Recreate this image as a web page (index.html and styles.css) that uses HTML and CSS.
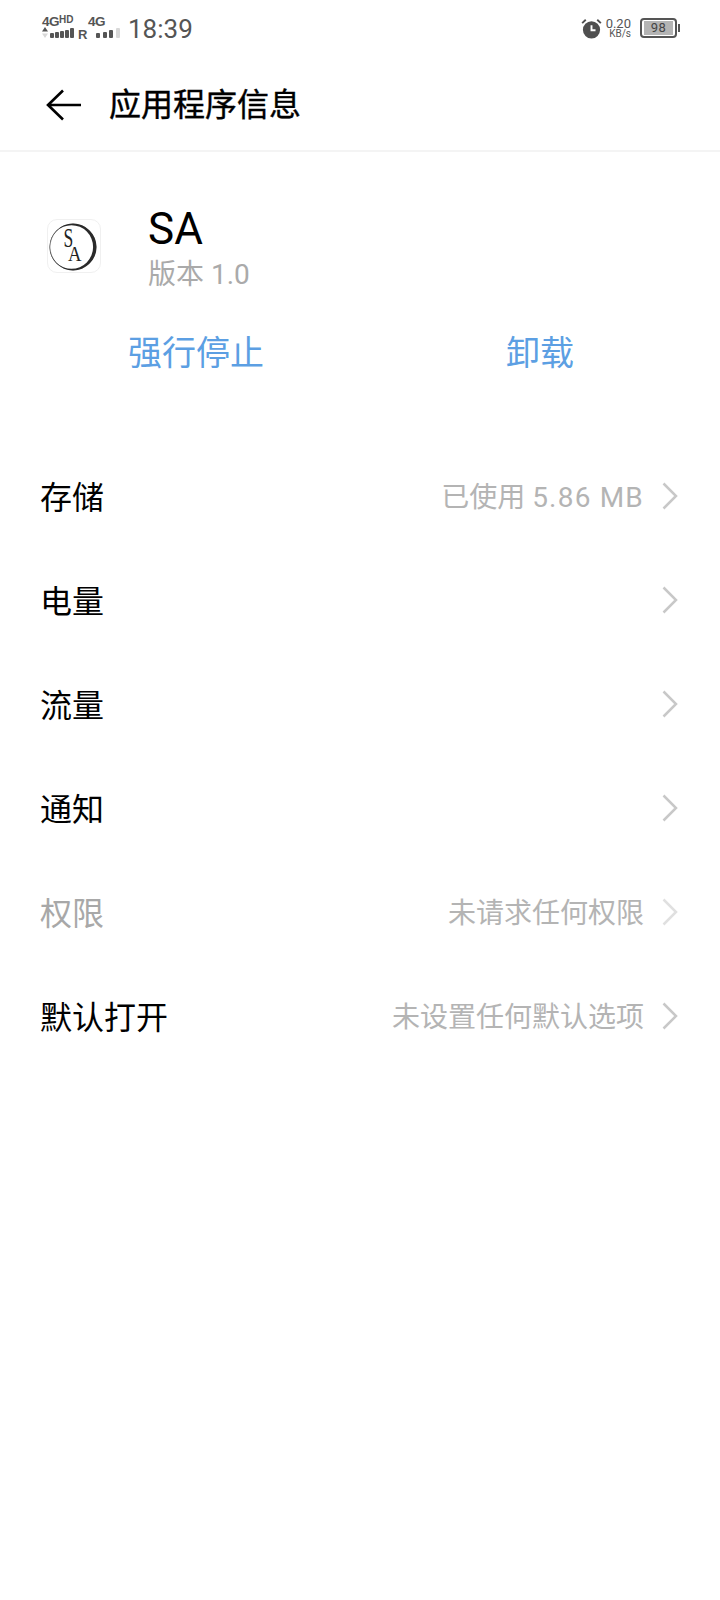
FILE: index.html
```html
<!DOCTYPE html>
<html lang="zh-CN">
<head>
<meta charset="utf-8">
<title>应用程序信息</title>
<link rel="stylesheet" href="styles.css">
</head>
<body>
<div class="phone">
  <header class="status">
    <div class="status-left">
      <div class="sim">
        <div class="net"><span class="net-g">4G</span><span class="net-hd">HD</span></div>
        <div class="bars">
          <svg class="updown" viewBox="0 0 6 11" width="6" height="11"><path d="M3 0 6 4.500H0z" fill="#555"/><path d="M3 11 0 6.500h6z" fill="#d8d8d8"/></svg>
          <i class="bar h5"></i><i class="bar h6"></i><i class="bar h7"></i><i class="bar h8"></i><i class="bar h10"></i>
        </div>
      </div>
      <span class="roam">R</span>
      <div class="sim sim2">
        <div class="net"><span class="net-g">4G</span></div>
        <div class="bars bars-inset">
          <i class="bar h5 wide"></i><i class="bar h6 wide"></i><i class="bar h8 wide"></i><i class="bar h10 wide off"></i>
        </div>
      </div>
      <span class="clock">18:39</span>
    </div>
    <div class="status-right">
      <svg class="alarm" viewBox="0 0 22 22" width="21" height="21">
        <circle cx="11" cy="12.400" r="9" fill="#4f4f4f"/>
        <path d="M11 7.500v5.400h4.200" fill="none" stroke="#fff" stroke-width="2"/>
        <path d="M1.200 5.400 5 1.800M20.800 5.400 17 1.800" fill="none" stroke="#4f4f4f" stroke-width="2"/>
      </svg>
      <div class="speed"><span class="speed-num">0.20</span><span class="speed-unit">KB/s</span></div>
      <div class="battery"><div class="cell">98</div></div><i class="nub"></i>
    </div>
  </header>

  <nav class="titlebar">
    <svg class="back" viewBox="0 0 36 32" width="36" height="32"><path d="M35 16H2M17 1.500 2 16l15 14.500" fill="none" stroke="#000" stroke-width="2.600"/></svg>
    <h1 class="title">应用程序信息</h1>
  </nav>

  <section class="app">
    <div class="app-icon">
      <svg viewBox="0 0 52 52" width="52" height="52">
        <circle cx="25" cy="27" r="23" fill="#fff" stroke="#8a8a8a" stroke-width="0.700"/>
        <path fill-rule="evenodd" d="M1.500 27a23.500 23.500 0 1 0 47 0 23.500 23.500 0 1 0-47 0zM1.900 27a21.600 21.800 0 1 0 43.200 0 21.600 21.800 0 1 0-43.200 0z" fill="#2a2a2a"/>
        <text class="mono" transform="translate(15.500 27) scale(.65 1)" font-size="27">S</text>
        <text class="mono" transform="translate(20 41) scale(.85 1)" font-size="22">A</text>
      </svg>
    </div>
    <div class="app-text">
      <div class="app-name">SA</div>
      <div class="app-ver">版本 1.0</div>
    </div>
  </section>

  <div class="actions">
    <a class="action">强行停止</a>
    <a class="action">卸载</a>
  </div>

  <ul class="list">
    <li class="row"><span class="label">存储</span><span class="value">已使用 <span class="num">5.86 MB</span></span><svg class="chev" viewBox="0 0 16 28" width="16" height="28"><path d="M1.500 1.500 14 14 1.500 26.500"/></svg></li>
    <li class="row"><span class="label">电量</span><svg class="chev" viewBox="0 0 16 28" width="16" height="28"><path d="M1.500 1.500 14 14 1.500 26.500"/></svg></li>
    <li class="row"><span class="label">流量</span><svg class="chev" viewBox="0 0 16 28" width="16" height="28"><path d="M1.500 1.500 14 14 1.500 26.500"/></svg></li>
    <li class="row"><span class="label">通知</span><svg class="chev" viewBox="0 0 16 28" width="16" height="28"><path d="M1.500 1.500 14 14 1.500 26.500"/></svg></li>
    <li class="row disabled"><span class="label">权限</span><span class="value">未请求任何权限</span><svg class="chev" viewBox="0 0 16 28" width="16" height="28"><path d="M1.500 1.500 14 14 1.500 26.500"/></svg></li>
    <li class="row"><span class="label">默认打开</span><span class="value">未设置任何默认选项</span><svg class="chev" viewBox="0 0 16 28" width="16" height="28"><path d="M1.500 1.500 14 14 1.500 26.500"/></svg></li>
  </ul>
</div>
</body>
</html>
```
FILE: styles.css
```css
* { box-sizing: border-box; }
html, body { margin: 0; padding: 0; background: #fff; }
body { font-family: "Roboto", "Noto Sans CJK SC", sans-serif; color: #000; }
.phone { width: 720px; height: 1600px; overflow: hidden; }

/* status bar */
.status { height: 56px; display: flex; justify-content: space-between; align-items: center; padding: 0 40px 0 42px; color: #555; }
.status-left, .status-right { display: flex; align-items: center; }
.sim { display: flex; flex-direction: column; width: 36px; margin-top: -5px; }
.sim2 { width: 40px; }
.net { display: flex; align-items: flex-start; height: 14px; font-family: "Liberation Sans", sans-serif; font-weight: 700; }
.net-g { font-size: 13.500px; line-height: 16px; letter-spacing: -0.500px; }
.net-hd { font-size: 10px; line-height: 11px; white-space: nowrap; }
.bars { display: flex; align-items: flex-end; gap: 1.500px; height: 10px; }
.bars-inset { padding-left: 8px; gap: 2.500px; }
.updown { margin-right: 0.500px; flex: none; }
.bar { display: block; width: 3.500px; background: #555; border-radius: 1px; flex: none; }
.bar.wide { width: 4px; }
.bar.off { background: #d8d8d8; }
.h5 { height: 5px; } .h6 { height: 6px; } .h7 { height: 7px; } .h8 { height: 8px; } .h10 { height: 10px; }
.roam { width: 10px; font: 700 13px/13px "Liberation Sans", sans-serif; margin-top: 13px; }
.clock { font-size: 26px; line-height: 30px; margin-top: 2px; }
.alarm { margin-right: 1px; margin-top: 1px; }
.speed { display: flex; flex-direction: column; align-items: flex-end; width: 28px; margin-right: 9px; }
.speed-num { font-size: 13px; line-height: 11px; }
.speed-unit { font-size: 10px; line-height: 10px; }
.battery { width: 37px; height: 20px; border: 2px solid #555; border-radius: 4px; padding: 1px 2px; }
.cell { height: 14px; background: #b4b4b4; font-size: 13px; line-height: 14px; text-align: center; letter-spacing: 0.500px; color: #444; }
.nub { display: block; width: 2px; height: 8px; background: #555; margin-left: 1px; }

/* title bar */
.titlebar { height: 96px; display: flex; align-items: center; padding: 4px 0 0 46px; border-bottom: 2px solid #f4f4f4; }
.back { margin-right: 27px; }
.title { margin: 0; font-size: 32px; font-weight: 400; line-height: 40px; -webkit-text-stroke: 0.400px #000; }

/* app header */
.app { display: flex; padding: 54px 0 0 47px; height: 168px; align-items: flex-start; }
.app-icon { width: 54px; height: 54px; margin-top: 13px; border: 1px solid #f0f0f0; border-radius: 10px; }
.app-icon svg { display: block; }
.mono { font-family: "Liberation Serif", serif; fill: #222; }
.app-text { margin-left: 47px; }
.app-name { font-size: 44px; line-height: 46px; height: 46px; }
.app-ver { font-size: 28px; line-height: 40px; color: #aaa; margin-top: 3px; }

/* actions */
.actions { display: flex; margin-top: 8px; padding: 0 8px 0 24px; }
.action { flex: 1; text-align: center; font-size: 34px; line-height: 50px; color: #5c9fe3; }

/* rows */
.list { list-style: none; margin: 65px 0 0; padding: 0; }
.row { height: 104px; display: flex; align-items: center; padding: 0 42px 0 40px; }
.label { font-size: 32px; margin-right: auto; }
.value { font-size: 28px; color: #b4b4b4; margin-right: 18px; }
.num { letter-spacing: 1.200px; }
.chev { margin-top: 2px; }
.chev path { fill: none; stroke: #c8c8c8; stroke-width: 2.500px; }
.disabled .label { color: #a8a8a8; }
.disabled .chev path { stroke: #e0e0e0; }
```
